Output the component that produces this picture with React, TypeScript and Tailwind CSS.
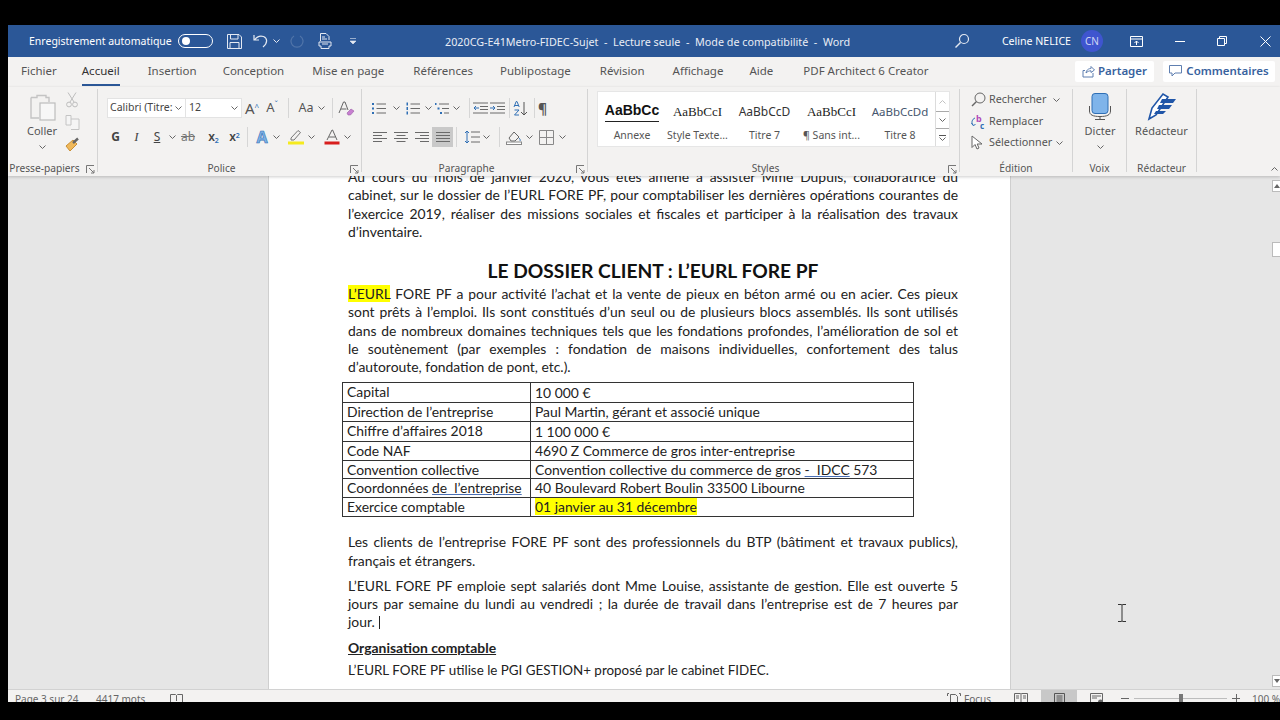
import React from "react";

const ui = "font-['Noto_Sans',sans-serif]";
const G = "#6a6a6a";

function Chev({ className = "" }: { className?: string }) {
  return (
    <svg width="7" height="4" viewBox="0 0 7 4" className={className}>
      <path d="M0.5 0.5 3.5 3.5 6.5 0.5" fill="none" stroke="#666" strokeWidth="1" />
    </svg>
  );
}
function Slot({ className = "w-[20px]", children }: { className?: string; children?: React.ReactNode }) {
  return <div className={"flex h-[20px] shrink-0 items-center justify-center " + className}>{children}</div>;
}
function Sep({ className = "" }: { className?: string }) {
  return <div className={"h-[20px] w-px shrink-0 bg-[#d6d6d6] " + className} />;
}
function Launcher() {
  return (
    <svg width="9" height="9" viewBox="0 0 9 9">
      <path d="M0.5 8V0.5H8M3 3l5 5M8 5v3H5" fill="none" stroke="#777" strokeWidth="1" />
    </svg>
  );
}
function Group({ w, label, launcher, children }: { w: string; label: string; launcher?: boolean; children: React.ReactNode }) {
  return (
    <div className={"flex h-[83px] shrink-0 flex-col border-r border-[#d4d4d4] " + w}>
      <div className="h-[72px]">{children}</div>
      <div className={"relative h-[11px] whitespace-nowrap text-center text-[10.2px] leading-[14px] text-[#555] " + (launcher ? "pr-[16px]" : "")}>
        {label}
        {launcher && <span className="absolute right-[2px] top-[4px] flex"><Launcher /></span>}
      </div>
    </div>
  );
}
function Lines({ rows }: { rows: [number, number][] }) {
  return (
    <svg width="14" height="12" viewBox="0 0 14 12">
      {rows.map(([x1, x2], i) => (
        <path key={i} d={`M${x1} ${1.5 + i * 3}H${x2}`} stroke={G} strokeWidth="1" />
      ))}
    </svg>
  );
}
function ListIcon({ kind }: { kind: "b" | "n" | "m" }) {
  const c = "#2f6fb5";
  return (
    <svg width="16" height="13" viewBox="0 0 16 13">
      {kind === "b" && [2, 6.5, 11].map((y) => <rect key={y} x="1" y={y - 1} width="2" height="2" fill={c} />)}
      {kind === "n" && [2, 6.5, 11].map((y) => <rect key={y} x="1.5" y={y - 1.5} width="1.5" height="3" fill={c} />)}
      {kind === "m" && (
        <>
          <rect x="1" y="1" width="1.5" height="2" fill={c} />
          <rect x="3.5" y="5.5" width="2" height="2" fill={c} />
          <rect x="6" y="10" width="2" height="2" fill={c} />
        </>
      )}
      <path
        d={kind === "m" ? "M5 2H15M8 6.5H15M10 11H15" : "M5.5 2H15M5.5 6.5H15M5.5 11H15"}
        stroke={G}
        strokeWidth="1"
      />
    </svg>
  );
}
function Indent({ dir }: { dir: "l" | "r" }) {
  return (
    <svg width="15" height="12" viewBox="0 0 15 12">
      <path d="M0 1H15M7 4.5H15M7 7.5H15M0 11H15" stroke={G} />
      <path d={dir === "l" ? "M6 6H1M3 4 1 6l2 2" : "M0 6H5M3 4l2 2-2 2"} stroke="#2f6fb5" fill="none" />
    </svg>
  );
}

const tabs: [string, string][] = [
  ["Fichier", "ml-[13px]"],
  ["Accueil", "ml-[25px]"],
  ["Insertion", "ml-[28px]"],
  ["Conception", "ml-[26px]"],
  ["Mise en page", "ml-[28px]"],
  ["Références", "ml-[29px]"],
  ["Publipostage", "ml-[27px]"],
  ["Révision", "ml-[29px]"],
  ["Affichage", "ml-[28px]"],
  ["Aide", "ml-[26px]"],
  ["PDF Architect 6 Creator", "ml-[30px]"],
];

function TitleBar() {
  return (
    <div className="flex h-[32px] shrink-0 items-center bg-[#2b5797] text-[10.6px] text-white">
      <span className="ml-[21px] mt-[2px] w-[149px] whitespace-nowrap text-[10.5px]">Enregistrement automatique</span>
      <div className="flex h-[14px] w-[35px] items-center rounded-full border border-white pl-[3px]">
        <div className="h-[8px] w-[8px] rounded-full bg-white" />
      </div>
      <svg width="15" height="15" viewBox="0 0 15 15" className="ml-[14px]">
        <path d="M0.5 0.5H12L14.5 3V14.5H0.5ZM3.5 0.5V5H11V0.5M3 14.5V8.5H12V14.5" fill="none" stroke="#e4e9f2" />
      </svg>
      <svg width="16" height="14" viewBox="0 0 16 14" className="ml-[11px]">
        <path d="M1 1V6H6M1.5 6C4 2.5 7.5 1.5 10.5 2.5 14.5 4 15 9 10 13" fill="none" stroke="#e4e9f2" strokeWidth="1.2" />
      </svg>
      <svg width="7" height="4" viewBox="0 0 7 4" className="ml-[4px]">
        <path d="M0.5 0.5 3.5 3.5 6.5 0.5" fill="none" stroke="#e4e9f2" />
      </svg>
      <svg width="15" height="15" viewBox="0 0 15 15" className="ml-[10px] opacity-20">
        <path d="M10 2A6 6 0 1 1 4 2" fill="none" stroke="#e4e9f2" strokeWidth="1.2" />
      </svg>
      <svg width="14" height="16" viewBox="0 0 14 16" className="ml-[13px]">
        <path d="M2.5 8V0.5H8L11 3.5V7M1 9H13V13H11V15.5H3V13H1Z" fill="none" stroke="#e4e9f2" />
        <path d="M4 4h3M4 6h5M4 11h6" stroke="#e4e9f2" />
      </svg>
      <svg width="8" height="7" viewBox="0 0 8 7" className="ml-[17px]">
        <path d="M1 0.5H7M1 3 4 6 7 3Z" fill="#e4e9f2" stroke="#e4e9f2" strokeWidth="0.6" />
      </svg>
      <span className="ml-[88px] mt-[2px] whitespace-nowrap text-[10.77px] text-[#e9edf5]">
        2020CG-E41Metro-FIDEC-Sujet&nbsp; -&nbsp; Lecture seule&nbsp; -&nbsp; Mode de compatibilité&nbsp; -&nbsp; Word
      </span>
      <div className="ml-auto flex items-center">
        <svg width="16" height="16" viewBox="0 0 16 16">
          <circle cx="10" cy="6" r="4.5" fill="none" stroke="#e4e9f2" strokeWidth="1.2" />
          <path d="M6.5 9.5 1.5 14.5" stroke="#e4e9f2" strokeWidth="1.4" />
        </svg>
        <span className="ml-[32px] mt-[2px] whitespace-nowrap">Celine NELICE</span>
        <div className="ml-[10px] flex h-[22px] w-[22px] items-center justify-center rounded-full bg-[#3f55cf] text-[10px] text-[#cfd6f5]">CN</div>
        <Slot className="ml-[18px] w-[30px]">
          <svg width="13" height="11" viewBox="0 0 13 11">
            <path d="M0.5 0.5H12.5V10.5H0.5ZM0.5 3H12.5" fill="none" stroke="#fff" />
            <path d="M6.5 9V5M4.5 7 6.5 5 8.5 7" fill="none" stroke="#fff" />
          </svg>
        </Slot>
        <Slot className="ml-[14px] w-[30px]">
          <div className="h-px w-[10px] bg-white" />
        </Slot>
        <Slot className="ml-[12px] w-[30px]">
          <svg width="10" height="10" viewBox="0 0 10 10">
            <path d="M0.5 2.5H7.5V9.5H0.5ZM2.5 2.5V0.5H9.5V7.5H7.5" fill="none" stroke="#fff" />
          </svg>
        </Slot>
        <Slot className="ml-[13px] w-[30px]">
          <svg width="11" height="11" viewBox="0 0 11 11">
            <path d="M0.5 0.5 10.5 10.5M10.5 0.5 0.5 10.5" stroke="#fff" />
          </svg>
        </Slot>
      </div>
    </div>
  );
}

function TabBar() {
  return (
    <div className="flex h-[30px] shrink-0 items-center bg-[#f3f2f1] pb-[2px] text-[11.5px] text-[#555]">
      {tabs.map(([t, m]) =>
        t === "Accueil" ? (
          <div key={t} className={"relative whitespace-nowrap text-[#333] " + m}>
            {t}
            <div className="absolute -bottom-[6px] left-0 right-0 h-[2px] bg-[#2b5797]" />
          </div>
        ) : (
          <span key={t} className={"whitespace-nowrap " + m}>{t}</span>
        )
      )}
      <div className="ml-auto flex items-center gap-[9px] pr-[5px] text-[11.5px] font-semibold text-[#38629e]">
        <div className="flex h-[21px] w-[79px] items-center justify-center gap-[3px] rounded-[2px] bg-white">
          <svg width="13" height="13" viewBox="0 0 13 13">
            <path d="M3 5.5H1V12H11V8M4 8C4.5 4.5 7 3.5 9 3.5V1.5L12.5 5 9 7.5V5.8C7 5.8 5.5 6.5 4 8Z" fill="none" stroke="#5f7fb0" />
          </svg>
          Partager
        </div>
        <div className="flex h-[21px] w-[112px] items-center justify-center gap-[4px] rounded-[2px] bg-white">
          <svg width="13" height="12" viewBox="0 0 13 12">
            <path d="M0.5 0.5H12.5V8H6L3 11V8H0.5Z" fill="none" stroke="#5f7fb0" />
          </svg>
          Commentaires
        </div>
      </div>
    </div>
  );
}

function Clipboard() {
  return (
    <Group w="w-[90px]" label="Presse-papiers" launcher>
      <div className="flex pt-[4px]">
        <div className="ml-[13px] flex w-[42px] flex-col items-center">
          <svg width="28" height="28" viewBox="0 0 28 28" className="ml-[4px]">
            <path d="M1 4.5H7V2.5H16V4.5H19V9" fill="none" stroke="#c4c4c4" strokeWidth="1.4" />
            <path d="M1 4.5V25H9" fill="none" stroke="#c4c4c4" strokeWidth="1.4" />
            <rect x="10" y="10" width="15" height="17" fill="#f7f7f7" stroke="#bdbdbd" strokeWidth="1.2" />
          </svg>
          <span className="mt-[2px] text-[11px] leading-[16px] text-[#555]">Coller</span>
          <Chev className="mt-[6px]" />
        </div>
        <div className="-ml-px -mt-px flex w-[20px] flex-col items-center gap-[7px]">
          <svg width="12" height="16" viewBox="0 0 12 16">
            <path d="M2 0.5 8 10M10 0.5 4 10" stroke="#bdbdbd" />
            <circle cx="3" cy="12.5" r="2.4" fill="none" stroke="#bdbdbd" />
            <circle cx="9" cy="12.5" r="2.4" fill="none" stroke="#bdbdbd" />
          </svg>
          <svg width="15" height="15" viewBox="0 0 15 15">
            <path d="M1 0.5H6V10H1ZM6 4H14V14.5H6" fill="#f5f5f5" stroke="#c4c4c4" />
          </svg>
          <svg width="15" height="15" viewBox="0 0 15 15">
            <path d="M1 9 5 14 12 7 8 3Z" fill="#f0b95a" stroke="#c98f35" />
            <path d="M8 6 13 1.5" stroke="#666" strokeWidth="2.4" />
          </svg>
        </div>
      </div>
    </Group>
  );
}

function Police() {
  return (
    <Group w="w-[264px]" label="Police" launcher>
      <div className="flex items-center pl-[9px] pt-[9px]">
        <div className="flex h-[20px] w-[79px] items-center justify-between border border-[#e3e3e3] bg-white pl-[2px] pr-[3px] text-[10.5px] text-[#444]">
          <span className="whitespace-nowrap">Calibri (Titre:</span><Chev />
        </div>
        <div className="flex h-[20px] w-[56px] items-center justify-between border border-l-0 border-[#e3e3e3] bg-white pl-[3px] pr-[3px] text-[10.5px] text-[#444]">
          12<Chev />
        </div>
        <Slot className="w-[20px]">
          <span className="text-[15px] text-[#555]">A<sup className="text-[8px] text-[#2f6fb5]">^</sup></span>
        </Slot>
        <Slot className="w-[20px]">
          <span className="text-[13px] text-[#555]">A<sup className="text-[8px] text-[#2f6fb5]">ˇ</sup></span>
        </Slot>
        <Sep className="ml-[6px]" />
        <Slot className="ml-[6px] w-[22px]"><span className="text-[12.5px] text-[#555]">Aa</span></Slot>
        <Chev className="ml-[1px]" />
        <Sep className="ml-[7px]" />
        <Slot className="ml-[2px] w-[22px]">
          <svg width="17" height="15" viewBox="0 0 17 15">
            <path d="M1 12 5.5 1H7L10 9M3 8H8.5" fill="none" stroke="#666" />
            <path d="M9 12 13 8 16 10 12.5 14H10Z" fill="#c77fd0" stroke="#9a5ca5" strokeWidth="0.6" />
          </svg>
        </Slot>
      </div>
      <div className="mt-[9px] flex items-center pl-[7px]">
        <Slot className="w-[21px]"><span className="text-[12px] font-bold text-[#444]">G</span></Slot>
        <Slot className="w-[21px]"><span className="font-['Liberation_Serif',serif] text-[13px] italic text-[#444]">I</span></Slot>
        <Slot className="w-[20px]"><span className="text-[12px] text-[#444] underline">S</span></Slot>
        <Chev className="ml-[2px]" />
        <Slot className="ml-[2px] w-[20px]"><span className="text-[12px] text-[#777] line-through">ab</span></Slot>
        <Slot className="ml-[5px] w-[21px]"><span className="text-[12px] font-semibold text-[#444]">x<sub className="text-[7px] text-[#2f6fb5]">2</sub></span></Slot>
        <Slot className="w-[21px]"><span className="text-[12px] font-semibold text-[#444]">x<sup className="text-[7px] text-[#2f6fb5]">2</sup></span></Slot>
        <Sep className="ml-[2px]" />
        <Slot className="ml-[4px] w-[20px]">
          <span className="text-[16px] font-bold leading-none text-[#7fb2e5] [-webkit-text-stroke:0.6px_#2f6fb5]">A</span>
        </Slot>
        <Chev className="ml-[1px]" />
        <Slot className="ml-[6px] w-[20px]">
          <svg width="16" height="16" viewBox="0 0 16 16">
            <path d="M3 9 10 1.5 12.5 3.5 6 11H3Z" fill="none" stroke="#777" />
            <rect x="0" y="12.5" width="16" height="3" fill="#f5ea1e" />
          </svg>
        </Slot>
        <Chev className="ml-[2px]" />
        <Slot className="ml-[7px] w-[20px]">
          <svg width="16" height="16" viewBox="0 0 16 16">
            <path d="M3 11 8 1H8.6L13 11M5 8H11.5" fill="none" stroke="#666" />
            <rect x="0.5" y="12.5" width="15" height="3" fill="#d81e1e" />
          </svg>
        </Slot>
        <Chev className="ml-[2px]" />
      </div>
    </Group>
  );
}

function Paragraphe() {
  return (
    <Group w="w-[226px]" label="Paragraphe" launcher>
      <div className="flex items-center pl-[7px] pt-[9px]">
        <Slot><ListIcon kind="b" /></Slot>
        <Slot className="ml-[2px] w-[10px]"><Chev /></Slot>
        <Slot className="ml-[4px]"><ListIcon kind="n" /></Slot>
        <Slot className="ml-[2px] w-[10px]"><Chev /></Slot>
        <Slot className="ml-px"><ListIcon kind="m" /></Slot>
        <Slot className="ml-px w-[10px]"><Chev /></Slot>
        <Sep className="ml-[8px]" />
        <Slot className="ml-[3px]"><Indent dir="l" /></Slot>
        <Slot className="ml-[2px]"><Indent dir="r" /></Slot>
        <Sep className="ml-[4px]" />
        <Slot className="ml-[3px]">
          <svg width="16" height="15" viewBox="0 0 16 15">
            <path d="M1 6 3.2 0.5H4L6.2 6M1.8 4.5H5.5M1.5 9H6L1.5 14H6" fill="none" stroke="#2f6fb5" />
            <path d="M11 1V14M8 11 11 14 14 11" fill="none" stroke="#555" />
          </svg>
        </Slot>
        <Sep className="ml-[5px]" />
        <Slot className="ml-[3px]"><span className="text-[14px] font-bold text-[#555]">¶</span></Slot>
      </div>
      <div className="mt-[9px] flex items-center pl-[7px]">
        <Slot className="w-[21px]"><Lines rows={[[0, 14], [0, 9], [0, 14], [0, 9]]} /></Slot>
        <Slot className="w-[21px]"><Lines rows={[[0, 14], [2.5, 11.5], [0, 14], [2.5, 11.5]]} /></Slot>
        <Slot className="w-[21px]"><Lines rows={[[0, 14], [5, 14], [0, 14], [5, 14]]} /></Slot>
        <Slot className="w-[21px] bg-[#c9c9c9]"><Lines rows={[[0, 14], [0, 14], [0, 14], [0, 14]]} /></Slot>
        <Sep className="ml-[3px]" />
        <Slot className="ml-[4px] w-[21px]">
          <svg width="16" height="14" viewBox="0 0 16 14">
            <path d="M3 1V13M1 3 3 1 5 3M1 11 3 13 5 11" fill="none" stroke="#2f6fb5" />
            <path d="M7 2H16M7 7H16M7 12H16" stroke={G} />
          </svg>
        </Slot>
        <Chev className="ml-px" />
        <Sep className="ml-[9px]" />
        <Slot className="ml-[4px] w-[20px]">
          <svg width="16" height="15" viewBox="0 0 16 15">
            <path d="M3 8 8 2 13 7 9 11H5Z" fill="none" stroke="#666" />
            <path d="M13 8C14 9 14.5 10 14 11" stroke="#2f6fb5" fill="none" />
            <rect x="0.5" y="12" width="15" height="2.5" fill="#fff" stroke="#888" />
          </svg>
        </Slot>
        <Chev className="ml-[2px]" />
        <Slot className="ml-[3px] w-[20px]">
          <svg width="15" height="15" viewBox="0 0 15 15">
            <path d="M0.5 0.5H14.5V14.5H0.5ZM7.5 0.5V14.5M0.5 7.5H14.5" fill="none" stroke="#888" />
          </svg>
        </Slot>
        <Chev className="ml-[3px]" />
      </div>
    </Group>
  );
}

function StyleItem({ sample, label, className, w = "w-[67px]" }: { sample: string; label: string; className: string; w?: string }) {
  return (
    <div className={"flex h-full shrink-0 flex-col items-center overflow-hidden " + w}>
      <div className={"flex h-[31px] items-center whitespace-nowrap " + className}>{sample}</div>
      <div className="whitespace-nowrap text-[10.5px] leading-[16px] text-[#555]">{label}</div>
    </div>
  );
}

function Styles() {
  return (
    <Group w="w-[372px]" label="Styles" launcher>
      <div className="ml-[9px] mt-[2px] flex h-[56px] w-[353px] border border-[#e6e6e6] bg-white">
        <div className="flex w-[339px] pl-[2px] pt-[4px]">
          <StyleItem sample="AaBbCc" label="Annexe" w="w-[64px]" className="!h-[26px] mb-[5px] border-b border-[#222] pt-[3px] font-['Liberation_Sans',sans-serif] text-[14px] font-bold text-[#111]" />
          <StyleItem sample="AaBbCcI" label="Style Texte..." className="font-['Liberation_Serif',serif] text-[13px] text-[#222]" />
          <StyleItem sample="AaBbCcD" label="Titre 7" className="text-[12px] text-[#333]" />
          <StyleItem sample="AaBbCcI" label="¶ Sans int..." className="font-['Liberation_Serif',serif] text-[13px] text-[#222]" />
          <StyleItem sample="AaBbCcDd" label="Titre 8" w="w-[70px]" className="text-[11.5px] text-[#46566e]" />
        </div>
        <div className="flex w-[14px] flex-col border-l border-[#dcdcdc]">
          <div className="flex h-[19px] items-center justify-center"><Chev className="rotate-180 opacity-40" /></div>
          <div className="flex h-[18px] items-center justify-center border-y border-[#aaa]"><Chev /></div>
          <div className="flex flex-1 flex-col items-center justify-center gap-[1px]">
            <div className="h-px w-[7px] bg-[#555]" />
            <Chev />
          </div>
        </div>
      </div>
    </Group>
  );
}

function Edition() {
  return (
    <Group w="w-[113px]" label="Édition">
      <div className="flex h-[21px] items-center pl-[11px] text-[10.8px] text-[#555]">
        <svg width="15" height="15" viewBox="0 0 15 15">
          <circle cx="9" cy="6" r="5" fill="none" stroke="#666" />
          <path d="M5.5 9.5 1 14" stroke="#666" strokeWidth="1.4" />
        </svg>
        <span className="ml-[3px] w-[64px] whitespace-nowrap">Rechercher</span>
        <Chev />
      </div>
      <div className="mt-px flex h-[21px] items-center pl-[10px] text-[10.8px] text-[#555]">
        <svg width="16" height="16" viewBox="0 0 16 16">
          <text x="6" y="8" fontSize="9" fontWeight="700" fill="#b048b8" fontFamily="Noto Sans">b</text>
          <text x="10" y="15" fontSize="8" fontWeight="700" fill="#2f6fb5" fontFamily="Noto Sans">c</text>
          <path d="M5 4C2 5 1 9 3 11M1.5 9 3 11.5 5.5 10.5" fill="none" stroke="#2f6fb5" />
        </svg>
        <span className="ml-[3px] whitespace-nowrap">Remplacer</span>
      </div>
      <div className="flex h-[21px] items-center pl-[11px] text-[10.8px] text-[#555]">
        <svg width="13" height="15" viewBox="0 0 13 15">
          <path d="M1 1V12.5L4 9.5 6 14 8 13 6.2 9H11Z" fill="#fff" stroke="#666" />
        </svg>
        <span className="ml-[5px] w-[67px] whitespace-nowrap">Sélectionner</span>
        <Chev />
      </div>
    </Group>
  );
}

function Voix() {
  return (
    <Group w="w-[54px]" label="Voix">
      <div className="flex flex-col items-center pl-px pt-[4px]">
        <svg width="24" height="28" viewBox="0 0 24 28">
          <rect x="4" y="0.5" width="16" height="20" rx="3" fill="#7fb4ea" stroke="#2f6fb5" />
          <path d="M1.5 13V18C1.5 22 5 23.5 12 23.5S22.5 22 22.5 18V13M12 23.5V26.5M7 26.5H17" fill="none" stroke="#555" />
        </svg>
        <span className="mt-[2px] text-[11px] leading-[16px] text-[#555]">Dicter</span>
        <Chev className="mt-[6px]" />
      </div>
    </Group>
  );
}

function Redacteur() {
  return (
    <Group w="w-[70px]" label="Rédacteur">
      <div className="flex flex-col items-center pt-[3px]">
        <svg width="30" height="29" viewBox="0 0 30 29">
          <path d="M2 27 5 16 16 2 21 5 9 23Z" fill="#fff" stroke="#2056a8" strokeWidth="1.6" />
          <path d="M15 7 29 7 26 11H13ZM12 13H25L22 17H10ZM9 19H19L16 22H7Z" fill="#2056a8" />
        </svg>
        <span className="mt-[2px] text-[11px] leading-[16px] text-[#555]">Rédacteur</span>
      </div>
    </Group>
  );
}

function Ribbon() {
  return (
    <div className={"relative z-10 flex h-[89px] shrink-0 bg-[#f3f2f1] pt-[2px] shadow-[0_1px_3px_rgba(0,0,0,0.2)]"}>
      <Clipboard />
      <Police />
      <Paragraphe />
      <Styles />
      <Edition />
      <Voix />
      <Redacteur />
      <Chev className="absolute bottom-[5px] right-[2px] rotate-180" />
    </div>
  );
}

function J({ children }: { children: React.ReactNode }) {
  return <div className="whitespace-nowrap text-justify [text-align-last:justify]">{children}</div>;
}
function L({ children }: { children: React.ReactNode }) {
  return <div className="whitespace-nowrap">{children}</div>;
}

const rows: [React.ReactNode, React.ReactNode, string][] = [
  ["Capital", "10 000 €", "h-[20px]"],
  ["Direction de l’entreprise", "Paul Martin, gérant et associé unique", "h-[19px]"],
  ["Chiffre d’affaires 2018", "1 100 000 €", "h-[20px]"],
  ["Code NAF", "4690 Z Commerce de gros inter-entreprise", "h-[19px]"],
  ["Convention collective", <>Convention collective du commerce de gros <span className="underline decoration-[#4a6fb5]">-&nbsp; IDCC</span> 573</>, "h-[18px]"],
  [<>Coordonnées <span className="underline decoration-[#4a6fb5]">de&nbsp; l’entreprise</span></>, "40 Boulevard Robert Boulin 33500 Libourne", "h-[19px]"],
  ["Exercice comptable", <span className="bg-[#ffff00]">01 janvier au 31 décembre</span>, "h-[19px]"],
];

function Doc() {
  return (
    <div className="flex min-h-0 flex-1 overflow-hidden bg-[#e6e6e6]">
      <div className="w-[260px] shrink-0" />
      <div className="relative h-[513px] w-[743px] shrink-0 overflow-hidden border-x border-[#cfcfcf] bg-white pl-[79px] pr-[52px] font-['Lato',sans-serif] text-[13.9px] leading-[18.25px] text-[#222]">
        <div className="-mt-[8px]">
          <J>Au cours du mois de janvier 2020, vous êtes amené à assister Mme Dupuis, collaboratrice du</J>
          <J>cabinet, sur le dossier de l’EURL FORE PF, pour comptabiliser les dernières opérations courantes de</J>
          <J>l’exercice 2019, réaliser des missions sociales et fiscales et participer à la réalisation des travaux</J>
          <L>d’inventaire.</L>
          <div className="mt-[17px] h-[27px] text-center text-[19.2px] font-bold leading-[26px] text-[#111]">LE DOSSIER CLIENT : L’EURL FORE PF</div>
          <J><span className="bg-[#ffff00]">L’EURL</span> FORE PF a pour activité l’achat et la vente de pieux en béton armé ou en acier. Ces pieux</J>
          <J>sont prêts à l’emploi. Ils sont constitués d’un seul ou de plusieurs blocs assemblés. Ils sont utilisés</J>
          <J>dans de nombreux domaines techniques tels que les fondations profondes, l’amélioration de sol et</J>
          <J>le soutènement (par exemples : fondation de maisons individuelles, confortement des talus</J>
          <L>d’autoroute, fondation de pont, etc.).</L>
          <div className="-ml-[6px] mt-[6px] w-[572px] border-t border-l border-[#333]">
            {rows.map(([a, b, h], i) => (
              <div key={i} className={"flex items-center border-b border-r border-[#333] " + h}>
                <div className="h-full w-[188px] shrink-0 whitespace-nowrap border-r border-[#333] pl-[4px]">{a}</div>
                <div className="whitespace-nowrap pl-[4px]">{b}</div>
              </div>
            ))}
          </div>
          <div className="mt-[16px]">
            <J>Les clients de l’entreprise FORE PF sont des professionnels du BTP (bâtiment et travaux publics),</J>
            <L>français et étrangers.</L>
          </div>
          <div className="mt-[7px]">
            <J>L’EURL FORE PF emploie sept salariés dont Mme Louise, assistante de gestion. Elle est ouverte 5</J>
            <J>jours par semaine du lundi au vendredi ; la durée de travail dans l’entreprise est de 7 heures par</J>
            <L>jour. <span className="ml-[1px] inline-block h-[13px] w-px translate-y-[2px] bg-[#222]" /></L>
          </div>
          <div className="mt-[7px] font-bold underline">Organisation comptable</div>
          <div className="mt-[4px] text-[13.4px]"><L>L’EURL FORE PF utilise le PGI GESTION+ proposé par le cabinet FIDEC.</L></div>
        </div>
      </div>
      <div className="relative flex-1">
        <svg width="12" height="18" viewBox="0 0 12 18" className="absolute left-[105px] top-[428px]">
          <path d="M2 0.5H5.5L6 1.5 6.5 0.5H10M6 1.5V16.5M2 17.5H5.5L6 16.5 6.5 17.5H10" fill="none" stroke="#333" />
        </svg>
      </div>
      <div className="flex w-[8px] shrink-0 flex-col">
        <div className="mt-[4px] flex h-[12px] items-center justify-center border border-r-0 border-[#bbb] bg-white">
          <svg width="6" height="4" viewBox="0 0 6 4"><path d="M0 4 3 0 6 4Z" fill="#666" /></svg>
        </div>
        <div className="mt-[50px] h-[15px] border border-r-0 border-[#bbb] bg-white" />
        <div className="mb-[2px] mt-auto flex h-[12px] items-center justify-center border border-r-0 border-[#bbb] bg-white">
          <svg width="6" height="4" viewBox="0 0 6 4"><path d="M0 0 3 4 6 0Z" fill="#666" /></svg>
        </div>
      </div>
    </div>
  );
}

function Status() {
  return (
    <div className="relative z-10 flex h-[13px] shrink-0 items-start overflow-hidden border-t border-[#d2d2d2] bg-[#f3f2f1] text-[10px] leading-[18px] text-[#666]">
      <span className="ml-[7px] w-[81px] whitespace-nowrap">Page 3 sur 24</span>
      <span className="w-[74px] whitespace-nowrap">4417 mots</span>
      <svg width="13" height="11" viewBox="0 0 13 11" className="mt-[4px]">
        <path d="M0.5 0.5H5.5L6.5 1.5 7.5 0.5H12.5V10H0.5ZM6.5 1.5V7" fill="none" stroke="#666" />
      </svg>
      <div className="ml-auto flex items-start">
        <svg width="14" height="14" viewBox="0 0 14 14" className="mt-[3px]">
          <path d="M3.5 1.5H8.5L10.5 3.5V12H3.5ZM0.5 3V0.5H2M13.5 3V0.5H12" fill="none" stroke="#666" />
        </svg>
        <span className="ml-[3px] w-[50px] whitespace-nowrap">Focus</span>
        <svg width="14" height="12" viewBox="0 0 14 12" className="mt-[3px]">
          <path d="M0.5 0.5H6.5L7 1 7.5 0.5H13.5V11H0.5ZM7 1V11M2 3H5M2 5H5M9 3H12M9 5H12" fill="none" stroke="#666" />
        </svg>
        <div className="ml-[13px] flex h-[13px] w-[36px] justify-center bg-[#c8c8c8]">
          <svg width="11" height="13" viewBox="0 0 11 13" className="mt-[3px]">
            <path d="M0.5 0.5H10.5V13H0.5ZM2.5 3H8.5M2.5 5H8.5M2.5 7H8.5M2.5 9H8.5" fill="none" stroke="#555" />
          </svg>
        </div>
        <svg width="14" height="12" viewBox="0 0 14 12" className="ml-[13px] mt-[3px]">
          <path d="M0.5 0.5H12.5V11H0.5ZM2 3H11M2 5H7" fill="none" stroke="#666" />
          <circle cx="10.5" cy="9" r="2.5" fill="#666" />
        </svg>
        <div className="ml-[17px] mt-[8px] h-px w-[8px] bg-[#666]" />
        <div className="relative ml-[5px] mt-[8px] h-px w-[93px] bg-[#bdbdbd]">
          <div className="absolute -top-[4px] left-[45px] h-[9px] w-[4px] bg-[#777]" />
        </div>
        <div className="relative ml-[5px] mt-[8px] h-px w-[8px] bg-[#666]">
          <div className="absolute -top-[4px] left-[3.5px] h-[9px] w-px bg-[#666]" />
        </div>
        <span className="ml-[12px] w-[28px] whitespace-nowrap">100 %</span>
      </div>
    </div>
  );
}

export default function App() {
  return (
    <div className={"h-[720px] w-[1280px] overflow-hidden bg-black pl-[8px] pt-[25px] " + ui}>
      <div className="flex h-[677px] w-[1272px] flex-col">
        <TitleBar />
        <TabBar />
        <Ribbon />
        <Doc />
        <Status />
      </div>
    </div>
  );
}
